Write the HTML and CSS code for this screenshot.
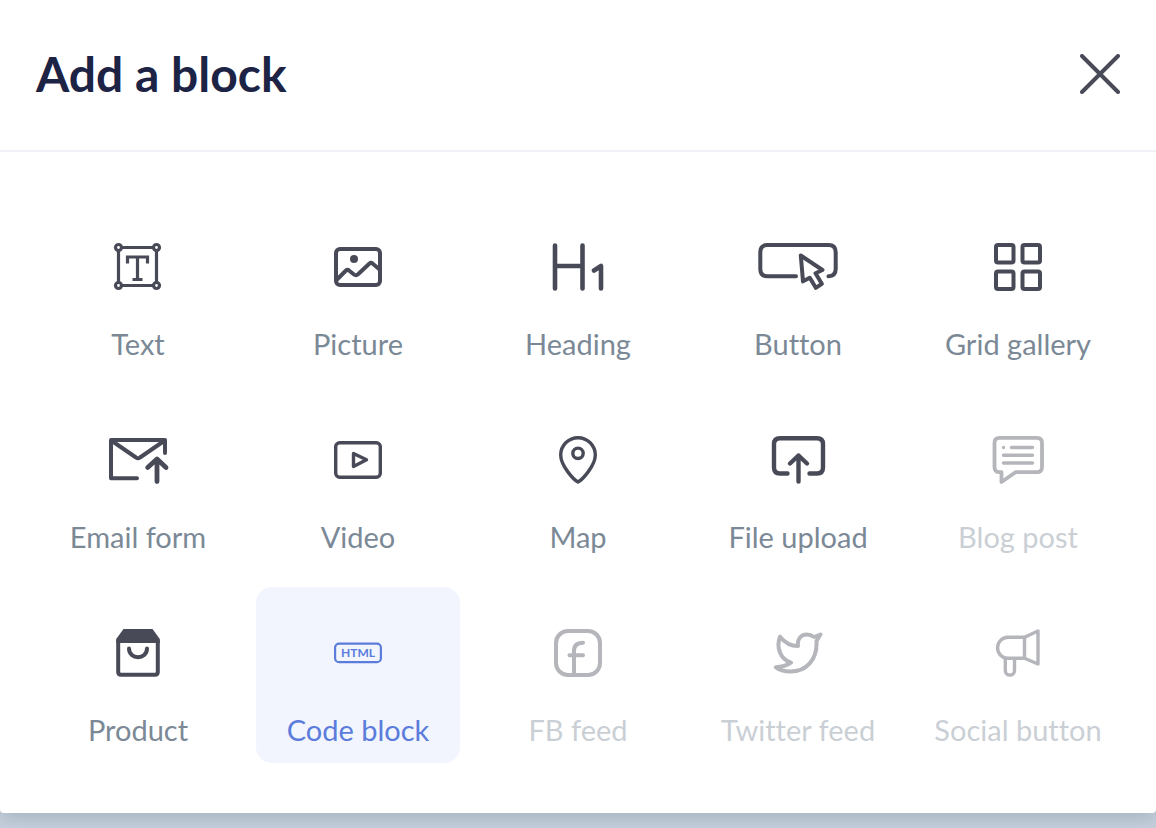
FILE: index.html
```html
<!DOCTYPE html>
<html lang="en">
<head>
  <meta charset="utf-8">
  <meta name="viewport" content="width=device-width, initial-scale=1">
  <title>Add a block</title>
  <link rel="stylesheet" href="styles.css">
</head>
<body>
  <main class="modal">
    <header class="modal-header">
      <h1>Add a block</h1>
      <button class="close" type="button" aria-label="Close">
        <svg viewBox="0 0 40 40"><path d="M2 2L38 38M38 2L2 38"/></svg>
      </button>
    </header>
    <div class="blocks">
      <button class="block" type="button">
        <svg class="icon" viewBox="0 0 80 80" stroke-width="3.2">
          <path d="M24 20.5H55M24 58.5H55M20.5 24V55M58.5 24V55"/>
          <circle cx="20.5" cy="20.5" r="3"/><circle cx="58.5" cy="20.5" r="3"/>
          <circle cx="20.5" cy="58.5" r="3"/><circle cx="58.5" cy="58.5" r="3"/>
          <path class="square" d="M29.5 36.5V30H49.5V36.5M39.5 30V53M34.5 52.5H44.5"/>
        </svg>
        <span>Text</span>
      </button>
      <button class="block" type="button">
        <svg class="icon" viewBox="0 0 80 80">
          <rect x="18" y="22" width="44" height="36" rx="4"/>
          <path d="M19 52.5L28 43.5Q29.5 42 31 43.5L36 47.5Q38 49 40 47.3L51.5 36.5Q53 35 54.5 36.5L61 42"/>
          <circle class="solid" cx="36" cy="32" r="4"/>
        </svg>
        <span>Picture</span>
      </button>
      <button class="block" type="button">
        <svg class="icon" viewBox="0 0 80 80" stroke-width="4.6">
          <path d="M17 18.5V61.5M44.5 18.5V61.5M17 39H44.5M56 43.5L63 39V61.5"/>
        </svg>
        <span>Heading</span>
      </button>
      <button class="block" type="button">
        <svg class="icon" viewBox="0 0 80 80">
          <path d="M38 49.3H9.5Q2.3 49.3 2.3 42V25.3Q2.3 18 9.5 18H70.5Q77.7 18 77.7 25.3V42Q77.7 49 70.5 49.3"/>
          <path d="M42.8 28.5L64.5 43L57.5 46.2L63.8 56.8L57.8 60.8L51.8 50.8L45 54.3Z"/>
        </svg>
        <span>Button</span>
      </button>
      <button class="block" type="button">
        <svg class="icon" viewBox="0 0 80 80">
          <rect x="18" y="18" width="17.5" height="17.5" rx="2"/><rect x="44.5" y="18" width="17.5" height="17.5" rx="2"/>
          <rect x="18" y="44.5" width="17.5" height="17.5" rx="2"/><rect x="44.5" y="44.5" width="17.5" height="17.5" rx="2"/>
        </svg>
        <span>Grid gallery</span>
      </button>

      <button class="block" type="button">
        <svg class="icon" viewBox="0 0 80 80">
          <path d="M39 58.3H13V20H67V33M14 21L38 37.5Q40 39 42 37.5L66 21"/>
          <path stroke-width="4.8" d="M59 61.5V39.5M49.7 47.5L59 39L68 47.5"/>
        </svg>
        <span>Email form</span>
      </button>
      <button class="block" type="button">
        <svg class="icon" viewBox="0 0 80 80" stroke-width="3.4">
          <rect x="17.7" y="22.7" width="44.6" height="34.6" rx="4"/>
          <path d="M35.5 33.5L48.5 39.8L35.5 46.5Z"/>
        </svg>
        <span>Video</span>
      </button>
      <button class="block" type="button">
        <svg class="icon" viewBox="0 0 80 80" stroke-width="3.4">
          <path d="M40 62C36 60 22.7 46 22.7 35A17.3 17.3 0 0 1 57.3 35C57.3 46 44 60 40 62Z"/>
          <circle cx="40" cy="33.3" r="5.2"/>
        </svg>
        <span>Map</span>
      </button>
      <button class="block" type="button">
        <svg class="icon" viewBox="0 0 80 80" stroke-width="4.4">
          <path d="M29.5 53.5H22Q16 53.5 16 47.5V24Q16 18.2 22 18.2H59Q65 18.2 65 24V47.5Q65 53.5 59 53.5H51.5"/>
          <path d="M40.5 61.5V35.5M32 43.5L40.5 35.5L49 43.5"/>
        </svg>
        <span>File upload</span>
      </button>
      <button class="block" type="button" disabled>
        <svg class="icon" viewBox="0 0 80 80" stroke-width="3.8">
          <path d="M23.5 62V52.2H21.5Q16.5 52.2 16.5 47V23Q16.5 17.8 21.5 17.8H59Q64 17.8 64 23V47Q64 52.2 59 52.2H37.5Z"/>
          <path stroke-width="3.4" d="M25.5 27.5V27.6M33.5 27.5H54.5M25.5 35.3H54.5M25.5 43H54.5"/>
        </svg>
        <span>Blog post</span>
      </button>

      <button class="block" type="button">
        <svg class="icon" viewBox="0 0 80 80">
          <path class="solid" d="M25.5 16H54.5L61.8 26V30H18.2V26Z"/>
          <path d="M20.2 28V59Q20.2 61.7 23 61.7H57Q59.8 61.7 59.8 59V28"/>
          <path d="M31 35.5C31 47 49 47 49 35.5"/>
        </svg>
        <span>Product</span>
      </button>
      <button class="block selected" type="button">
        <svg class="icon" viewBox="0 0 80 80" stroke-width="2.2">
          <rect x="17.1" y="30.6" width="45.8" height="18.6" rx="4"/>
          <text x="40" y="44">HTML</text>
        </svg>
        <span>Code block</span>
      </button>
      <button class="block" type="button" disabled>
        <svg class="icon" viewBox="0 0 80 80">
          <rect x="18" y="18" width="44" height="44" rx="12"/>
          <path d="M36 61V38Q36 29.8 45 29.8M31.5 42.3H45"/>
        </svg>
        <span>FB feed</span>
      </button>
      <button class="block" type="button" disabled>
        <svg class="icon" viewBox="0 0 80 80">
          <path d="M40 33C39 26 43 21.5 48.7 21.5C52 21.5 54 22.5 56 24L62.5 21.5L58.5 28C59.5 47 48 58.5 32.5 58.5C27 58.5 21 57 17.8 54.3C24 54 29 52.5 33 49.7C22 46 18 34 22 23.7C27 30 33 33 40 33Z"/>
        </svg>
        <span>Twitter feed</span>
      </button>
      <button class="block" type="button" disabled>
        <svg class="icon" viewBox="0 0 80 80" stroke-width="3.4">
          <path d="M46.5 24.3H30A10.5 10.5 0 0 0 30 45.3H46.5ZM46.5 24.3L60 18V51L46.5 45.3"/>
          <path d="M27.3 46V57.5A4.6 4.6 0 0 0 36.5 57.5V46"/>
        </svg>
        <span>Social button</span>
      </button>
    </div>
  </main>
</body>
</html>
```
FILE: styles.css
```css
* {
  box-sizing: border-box;
}

body {
  margin: 0;
  min-height: 100vh;
  font-family: Lato, "Noto Sans", sans-serif;
  background-color: #c8d0dd;
}

.modal {
  background-color: #fff;
  border-radius: 0 0 4px 4px;
  box-shadow: 0 4px 20px rgba(70, 110, 120, 0.3);
}

.modal-header {
  display: flex;
  justify-content: space-between;
  align-items: center;
  padding: 45px 36px 47px;
  border-bottom: 2px solid #f0f2f7;
}

.modal-header h1 {
  margin: 0;
  font-size: 48px;
  line-height: 58px;
  font-weight: 700;
  color: #1d2345;
}

.close {
  width: 40px;
  height: 40px;
  padding: 0;
  border: none;
  background: none;
  cursor: pointer;
}

.close svg {
  display: block;
  fill: none;
  stroke: #484b57;
  stroke-width: 4;
  stroke-linecap: round;
}

.blocks {
  display: grid;
  grid-template-columns: repeat(5, 1fr);
  gap: 17px 16px;
  padding: 49px 36px 50px;
}

.block {
  display: flex;
  flex-direction: column;
  align-items: center;
  gap: 17px;
  padding: 26px 0 13px;
  border: none;
  border-radius: 16px;
  background: none;
  font-family: inherit;
  font-size: 29px;
  font-variant-ligatures: none;
  line-height: 40px;
  white-space: nowrap;
  color: #7b8996;
  cursor: pointer;
}

.block:disabled {
  opacity: 0.4;
  cursor: default;
}

.block.selected {
  background-color: #f2f5fe;
  color: #5b7cdb;
}

.icon {
  width: 80px;
  height: 80px;
  fill: none;
  stroke: #484b57;
  stroke-linecap: round;
  stroke-linejoin: round;
}

.icon:not([stroke-width]) {
  stroke-width: 4;
}

.icon .square {
  stroke-linecap: butt;
  stroke-linejoin: miter;
}

.icon .solid {
  fill: #484b57;
  stroke: none;
}

.selected .icon {
  stroke: #5b7cdb;
}

.selected .icon text {
  fill: #5b7cdb;
  stroke: none;
  font-size: 12px;
  font-weight: 700;
  text-anchor: middle;
}
```
